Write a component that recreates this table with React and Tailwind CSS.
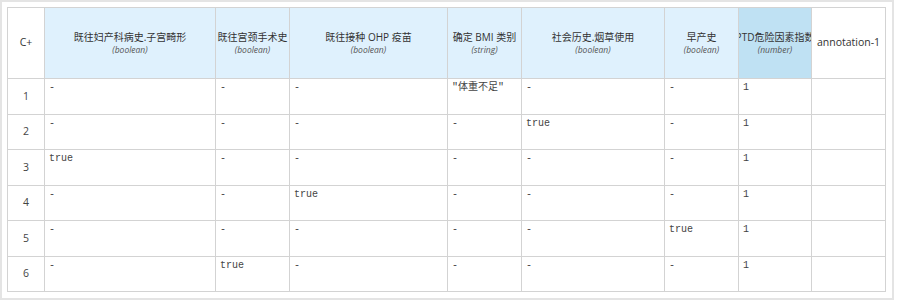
import React from "react";

const cols = [
  { title: "既往妇产科病史.子宫畸形", type: "boolean" },
  { title: "既往宫颈手术史", type: "boolean" },
  { title: "既往接种 OHP 疫苗", type: "boolean" },
  { title: "确定 BMI 类别", type: "string" },
  { title: "社会历史.烟草使用", type: "boolean" },
  { title: "早产史", type: "boolean" },
  { title: "PTD危险因素指数", type: "number", dark: true },
];

const rows = [
  ["-", "-", "-", "\"体重不足\"", "-", "-", "1"],
  ["-", "-", "-", "-", "true", "-", "1"],
  ["true", "-", "-", "-", "-", "-", "1"],
  ["-", "-", "true", "-", "-", "-", "1"],
  ["-", "-", "-", "-", "-", "true", "1"],
  ["-", "true", "-", "-", "-", "-", "1"],
];

const sans = "font-['Open_Sans','Noto_Sans_CJK_SC',sans-serif]";
const mono = "font-['Liberation_Mono','Noto_Sans_CJK_SC',monospace]";

export default function App() {
  return (
    <div className="w-[900px] h-[306px] bg-white">
      <div className="w-[894px] h-[300px] border-2 border-[#e4e4e4] pt-[5px] pl-[5px]">
        <div className="grid w-[879px] gap-px bg-[#d3d3d3] border border-[#d3d3d3] grid-cols-[36px_170px_73px_157px_73px_142px_73px_72px_73px] grid-rows-[70px_35px_34px_35px_34px_35px_34px]">
          <div className={"bg-white flex items-center justify-center text-[10.5px] text-[#333] " + sans}>
            C+
          </div>
          {cols.map((c, i) => (
            <div
              key={i}
              className={
                "flex flex-col items-center justify-center overflow-hidden whitespace-nowrap " +
                sans +
                " " +
                (c.dark ? "bg-[#bfe1f3]" : "bg-[#dff1fd]")
              }
            >
              <div className="text-[10px] leading-[13px] text-[#333]">{c.title}</div>
              <div className="text-[8.5px] leading-[11px] italic text-[#555]">({c.type})</div>
            </div>
          ))}
          <div className={"bg-white flex items-center justify-center text-[10.5px] text-[#333] " + sans}>
            annotation-1
          </div>
          {rows.map((r, ri) => (
            <React.Fragment key={ri}>
              <div className={"bg-white flex items-center justify-center text-[10.5px] text-[#444] " + sans}>
                {ri + 1}
              </div>
              {r.map((v, ci) => (
                <div
                  key={ci}
                  className={
                    "bg-white pl-[4px] pt-[3px] text-[10px] leading-[12px] text-[#444] whitespace-nowrap overflow-hidden " +
                    mono
                  }
                >
                  {v}
                </div>
              ))}
              <div className="bg-white" />
            </React.Fragment>
          ))}
        </div>
      </div>
    </div>
  );
}
